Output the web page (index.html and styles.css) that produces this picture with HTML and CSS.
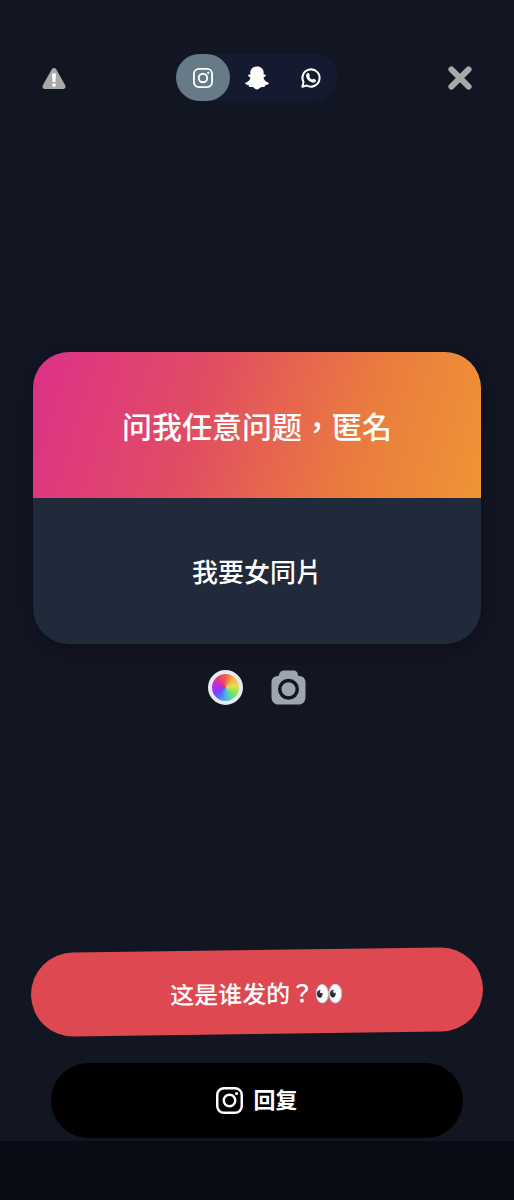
FILE: index.html
```
<!DOCTYPE html>
<html lang="zh-Hant">
<head>
    <meta charset="UTF-8">
    <meta name="viewport" content="width=device-width, initial-scale=1.0">
    <title>问我任意问题</title>
    <link rel="stylesheet" href="styles.css">
</head>
<body>
    <!-- 顶部栏 -->
    <header class="top-bar">
        <button type="button" class="icon-btn" aria-label="举报">
            <svg width="24" height="24" viewBox="0 0 24 24">
                <path d="M12 4.500 L21 20.500 H3 Z" fill="#a9a9aa" stroke="#a9a9aa" stroke-width="5" stroke-linejoin="round"/>
                <path d="M10 7.600h4l-.6 8.400h-2.800z" fill="#fff"/>
                <rect x="10.300" y="17.400" width="3.400" height="3.400" rx="1" fill="#fff"/>
            </svg>
        </button>

        <nav class="share-tabs">
            <button type="button" class="share-tab active" aria-label="Instagram">
                <svg width="20" height="20" viewBox="0 0 24 24" fill="none" stroke="#fff" stroke-width="2.2">
                    <rect x="1.1" y="1.1" width="21.8" height="21.8" rx="6"/>
                    <circle cx="12" cy="12" r="5.1"/>
                    <circle cx="18.3" cy="5.8" r="1.4" fill="#fff" stroke="none"/>
                </svg>
            </button>
            <button type="button" class="share-tab" aria-label="Snapchat">
                <svg width="24" height="24" viewBox="0 0 24 24" fill="#fff">
                    <path d="M12 .5C8 .5 5.300 3 5.300 7v1.700C4.500 8.500 3.300 8.600 3.100 9.400c-.2.900.9 1.400 1.900 1.900.5.400.4.900 0 1.600-.9 1.800-2.200 3-4.200 3.700-.7.300-.7 1.300 0 1.700.8.500 1.700.8 2.700 1 .4.100.4.500.5 1 .1.500.4.800.9.800.9 0 1.600-.2 2.600 0 1.500.3 2.300 2.300 4.500 2.300s3-2 4.500-2.300c1-.2 1.700 0 2.600 0 .5 0 .8-.3.900-.8.1-.5.100-.9.500-1 1-.2 1.900-.5 2.700-1 .7-.4.700-1.400 0-1.700-2-.7-3.300-1.900-4.200-3.700-.4-.7-.5-1.200 0-1.600 1-.5 2.100-1 1.900-1.900-.2-.8-1.400-.9-2.200-.7V7C18.700 3 16 .5 12 .5z"/>
                </svg>
            </button>
            <button type="button" class="share-tab" aria-label="WhatsApp">
                <svg width="20" height="20" viewBox="0 0 20 20">
                    <path d="M1.300 18.700 2.500 14.200A8.600 8.600 0 1 1 5.800 17.500Z" fill="none" stroke="#fff" stroke-width="2" stroke-linejoin="round"/>
                    <path d="M6.300 5.300c.5-.5 1.300-.5 1.600.1l.9 1.900c.2.400-.1.900-.6 1.500.8 1.400 1.600 2.200 3 2.900.5-.5.900-1.100 1.400-.9l2 1c.6.300.5 1 .1 1.600-.8 1.200-2.400 1.500-4.200.9-2.500-.9-4.400-2.800-5.200-5.200-.5-1.500-.1-2.900 1-3.800z" fill="#fff"/>
                </svg>
            </button>
        </nav>

        <button type="button" class="icon-btn" aria-label="关闭">
            <svg width="24" height="24" viewBox="0 0 24 24" fill="none" stroke="#a9a9aa" stroke-width="6" stroke-linecap="round">
                <path d="M3.400 3.400 20.600 20.600M20.600 3.400 3.400 20.600"/>
            </svg>
        </button>
    </header>

    <!-- 问题卡片 -->
    <main class="content">
        <section class="card">
            <h1 class="card-title">问我任意问题，匿名</h1>
            <p class="card-text">我要女同片</p>
        </section>

        <div class="tools">
            <button type="button" class="icon-btn" aria-label="颜色">
                <span class="color-wheel"></span>
            </button>
            <button type="button" class="icon-btn" aria-label="相机">
                <svg width="35" height="35" viewBox="0 0 36 36">
                    <path d="M13.500 .5h9.500c3 0 4.500 1.800 4.700 4.300.1 1 .7 1.200 1.600 1.300C33.500 6.500 35.500 9 35.500 13v14.500c0 5-2.500 8-7.500 8H8c-5 0-7.500-3-7.500-8V13c0-4 2-6.500 6.200-6.900.9-.1 1.500-.3 1.600-1.300C8.500 2.300 10.500.5 13.500.5z" fill="#9ea5ad"/>
                    <circle cx="18" cy="19.800" r="9" fill="none" stroke="#121522" stroke-width="3.600"/>
                </svg>
            </button>
        </div>
    </main>

    <!-- 底部操作 -->
    <div class="actions">
        <button type="button" class="who-btn">这是谁发的？<span class="emoji">👀</span></button>
        <button type="button" class="reply-btn">
            <svg width="27" height="27" viewBox="0 0 24 24" fill="none" stroke="#fff" stroke-width="2.200">
                <rect x="1.100" y="1.100" width="21.800" height="21.800" rx="6"/>
                <circle cx="12" cy="12" r="5.100"/>
                <circle cx="18.300" cy="5.800" r="1.400" fill="#fff" stroke="none"/>
            </svg>
            <span class="reply-label">回复</span>
        </button>
    </div>

    <footer class="bottom-strip"></footer>
</body>
</html>
```

FILE: styles.css
```
* {
    box-sizing: border-box;
}

body {
    display: flex;
    flex-direction: column;
    min-height: 100vh;
    margin: 0;
    background: #121522;
    color: #fff;
    font-family: "Noto Sans CJK TC", "Noto Color Emoji", sans-serif;
    font-weight: 500;
}

button {
    display: flex;
    align-items: center;
    justify-content: center;
    padding: 0;
    border: none;
    background: none;
    color: inherit;
    font: inherit;
    cursor: pointer;
}

svg {
    overflow: visible;
}

/* 顶部栏 */
.top-bar {
    display: flex;
    align-items: center;
    justify-content: space-between;
    padding: 54px 42px 0;
}

.share-tabs {
    display: flex;
    border-radius: 24px;
    background: #141a30;
}

.share-tab {
    width: 54px;
    height: 47px;
    border-radius: 24px;
}

.share-tab.active {
    background: #667b87;
}

/* 问题卡片 */
.content {
    display: flex;
    flex: 1;
    flex-direction: column;
    justify-content: center;
    padding: 6px 33px 0;
}

.card {
    overflow: hidden;
    border-radius: 36px;
    background: #212a3a;
    box-shadow: 0 4px 16px rgba(0, 0, 0, 0.25);
    text-align: center;
}

.card-title,
.card-text {
    margin: 0;
    padding: 52px 24px;
    font-weight: 500;
    line-height: 42px;
}

.card-title {
    background: linear-gradient(107deg, #dd3189 0%, #e14d62 38%, #e66450 54%, #ea7c3e 72%, #f09435 100%);
    font-size: 30px;
}

.card-text {
    font-size: 26px;
}

.tools {
    display: flex;
    justify-content: center;
    gap: 28px;
    margin-top: 26px;
}

.color-wheel {
    width: 35px;
    height: 35px;
    border: 4px solid #e9e9f0;
    border-radius: 50%;
    background: conic-gradient(#f2604a, #f0b04a 40deg, #e8e04e 80deg, #7de55c 125deg, #4fc8c8 165deg, #4a90ff 200deg, #6a4cff 235deg, #b02cf0 275deg, #e0348c 315deg, #f2604a);
    background-origin: border-box;
}

/* 底部操作 */
.actions {
    display: flex;
    flex-direction: column;
    gap: 29px;
    padding: 0 31px 3px;
}

.who-btn {
    height: 84px;
    border-radius: 42px;
    background: #de4851;
    font-size: 24px;
    transform: rotate(-0.8deg);
}

.emoji {
    font-size: 24px;
}

.reply-btn {
    gap: 10px;
    height: 75px;
    margin: 0 20px;
    border-radius: 38px;
    background: #000;
    font-size: 22px;
    font-weight: 700;
}

.reply-label {
    padding-bottom: 6px;
}

.bottom-strip {
    height: 59px;
    background: #080c14;
}
```
